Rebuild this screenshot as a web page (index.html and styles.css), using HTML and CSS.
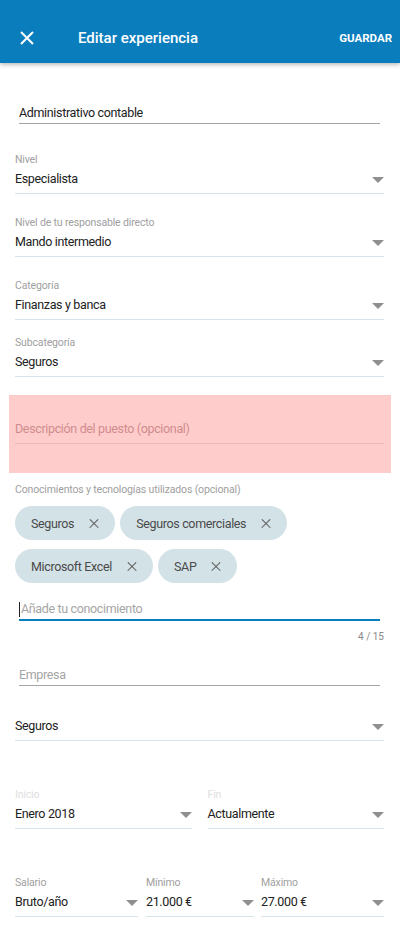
FILE: index.html
```html
<!DOCTYPE html>
<html lang="es">

<head>
    <meta charset="UTF-8">
    <title>Editar experiencia</title>
    <link rel="stylesheet" href="styles.css">
</head>

<body>
    <header class="topbar">
        <button class="close" aria-label="Cerrar">
            <svg width="14" height="14" viewBox="0 0 14 14">
                <path d="M1 1L13 13M13 1L1 13" stroke="#fff" stroke-width="2" fill="none" />
            </svg>
        </button>
        <h1>Editar experiencia</h1>
        <span class="save">GUARDAR</span>
    </header>

    <main class="form">
        <div class="text-field title-field">Administrativo contable</div>

        <div class="select first">
            <div class="label">Nivel</div>
            <div class="value">Especialista<i class="arrow"></i></div>
        </div>

        <div class="select">
            <div class="label">Nivel de tu responsable directo</div>
            <div class="value">Mando intermedio<i class="arrow"></i></div>
        </div>

        <div class="select">
            <div class="label">Categoría</div>
            <div class="value">Finanzas y banca<i class="arrow"></i></div>
        </div>

        <div class="select tight">
            <div class="label">Subcategoría</div>
            <div class="value">Seguros<i class="arrow"></i></div>
        </div>

        <div class="error-box">
            <div class="text-field placeholder">Descripción del puesto (opcional)</div>
        </div>

        <div class="label skills-label">Conocimientos y tecnologías utilizados (opcional)</div>
        <div class="chips">
            <span class="chip">Seguros<i class="chip-x"></i></span>
            <span class="chip">Seguros comerciales<i class="chip-x"></i></span>
            <span class="chip">Microsoft Excel<i class="chip-x"></i></span>
            <span class="chip">SAP<i class="chip-x"></i></span>
        </div>

        <div class="text-field focused placeholder"><span class="caret"></span>Añade tu conocimiento</div>
        <div class="counter">4 / 15</div>

        <div class="text-field placeholder company">Empresa</div>

        <div class="select sector">
            <div class="value">Seguros<i class="arrow"></i></div>
        </div>

        <div class="row dates">
            <div class="select">
                <div class="label disabled">Inicio</div>
                <div class="value">Enero 2018<i class="arrow"></i></div>
            </div>
            <div class="select">
                <div class="label disabled">Fin</div>
                <div class="value">Actualmente<i class="arrow"></i></div>
            </div>
        </div>

        <div class="row salary">
            <div class="select">
                <div class="label">Salario</div>
                <div class="value">Bruto/año<i class="arrow"></i></div>
            </div>
            <div class="select">
                <div class="label">Mínimo</div>
                <div class="value">21.000 €<i class="arrow"></i></div>
            </div>
            <div class="select">
                <div class="label">Máximo</div>
                <div class="value">27.000 €<i class="arrow"></i></div>
            </div>
        </div>
    </main>
</body>

</html>
```

FILE: styles.css
```css
body {
    margin: 0;
    background-color: #fff;
    font-family: Roboto, "Noto Sans", sans-serif;
    color: #222;
    overflow: hidden;
}

.topbar {
    box-sizing: border-box;
    height: 63px;
    padding-top: 12px;
    background-color: #0a7dbd;
    display: flex;
    align-items: center;
    color: #fff;
    box-shadow: 0 2px 4px rgba(0, 0, 0, 0.25);
    position: relative;
}

.close {
    background: none;
    border: 0;
    padding: 0;
    margin: 0 0 0 20px;
    width: 14px;
    height: 14px;
    display: flex;
}

.topbar h1 {
    margin: 0 0 0 44px;
    font-size: 15px;
    font-weight: 500;
    flex: 1;
}

.save {
    font-size: 11.5px;
    font-weight: 700;
    margin-right: 8px;
}

.form {
    padding: 0 16px 0 15px;
}

.label {
    font-size: 10.5px;
    line-height: 14px;
    color: #a0a0a0;
    letter-spacing: -0.15px;
}

.label.disabled {
    color: #dedede;
}

.text-field {
    margin: 0 4px;
    font-size: 12.5px;
    letter-spacing: -0.35px;
    line-height: 20px;
    border-bottom: 1.5px solid #a5a5a5;
}

.placeholder {
    color: #a5a5a5;
}

.title-field {
    margin-top: 40px;
    color: #222;
}

.select {
    margin-top: 22px;
}

.select.first {
    margin-top: 29px;
}

.select.tight {
    margin-top: 16px;
}

.select .value {
    position: relative;
    margin-top: 2px;
    font-size: 12.5px;
    letter-spacing: -0.35px;
    line-height: 20px;
    padding-bottom: 4px;
    border-bottom: 1px solid #d6e4ea;
}

.arrow {
    position: absolute;
    right: 0;
    top: 8px;
    width: 0;
    height: 0;
    border-left: 6px solid transparent;
    border-right: 6px solid transparent;
    border-top: 6px solid #8f8f8f;
}

.error-box {
    margin: 18px -7px 0 -6px;
    padding: 24px 7px 29px 6px;
    background-color: #ffcccc;
}

.error-box .text-field {
    margin: 0;
    padding-bottom: 4px;
    color: #cf8c8c;
    border-bottom: 1px solid #ebb8b8;
}

.skills-label {
    margin-top: 10px;
}

.chips {
    display: flex;
    flex-wrap: wrap;
    gap: 9px 5px;
    margin-top: 9px;
}

.chip {
    display: inline-flex;
    align-items: center;
    height: 34px;
    padding: 0 16px 0 16px;
    border-radius: 17px;
    background-color: #d3e2e7;
    color: #4a4a4a;
    font-size: 12.5px;
    letter-spacing: -0.35px;
}

.chip-x {
    position: relative;
    width: 10px;
    height: 10px;
    margin-left: 15px;
}

.chip-x::before,
.chip-x::after {
    content: "";
    position: absolute;
    left: -1px;
    top: 4.5px;
    width: 12px;
    height: 1.2px;
    background-color: #5a5a5a;
    transform: rotate(45deg);
}

.chip-x::after {
    transform: rotate(-45deg);
}

.focused {
    margin-top: 16px;
    border-bottom: 2px solid #0a7dbd;
    display: flex;
    align-items: center;
}

.caret {
    width: 1px;
    height: 15px;
    background-color: #222;
    margin-right: 1px;
}

.counter {
    margin-top: 9px;
    text-align: right;
    font-size: 10px;
    line-height: 14px;
    color: #888;
}

.company {
    margin-top: 21px;
}

.select.sector {
    margin-top: 30px;
}

.row {
    display: grid;
}

.row .select {
    margin-top: 0;
}

.dates {
    grid-template-columns: 1fr 1fr;
    column-gap: 16px;
    margin-top: 47px;
}

.salary {
    grid-template-columns: 123px 108px 1fr;
    column-gap: 8px;
    margin-top: 47px;
}

.salary .select:last-child {
    margin-left: -1px;
}
```
